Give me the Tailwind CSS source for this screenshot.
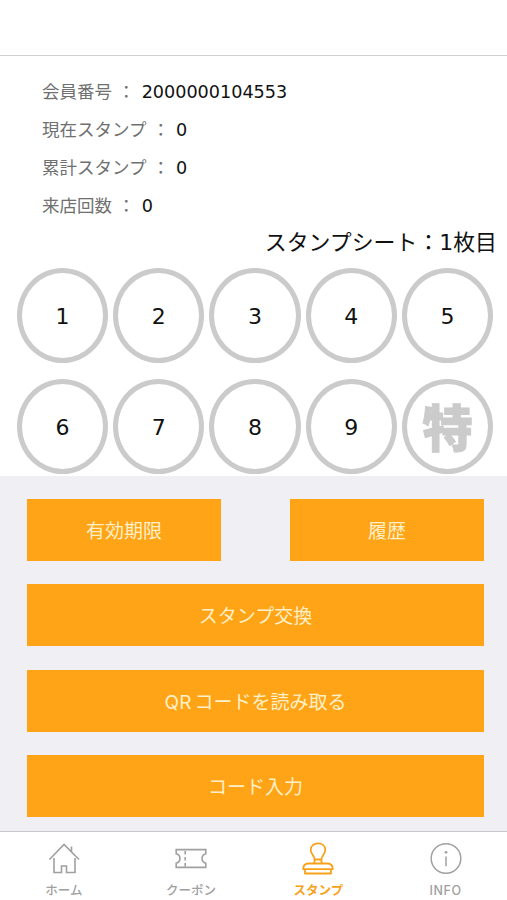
<!DOCTYPE html>
<html lang="ja">

<head>
    <meta charset="UTF-8" />
    <meta name="viewport" content="width=device-width, initial-scale=1.0" />
    <title>スタンプ</title>
    <script src="https://cdn.jsdelivr.net/npm/@tailwindcss/browser@4"></script>
</head>

<body class="bg-white font-['DejaVu_Sans','Noto_Sans_CJK_JP',sans-serif] text-[#111]">
    <div class="flex flex-col w-[507px] h-[900px] overflow-hidden">

        <!-- Header -->
        <header class="h-14 shrink-0 border-b border-[#d0d0d0]"></header>

        <main class="h-[420px] shrink-0">
            <!-- Member info -->
            <dl class="pl-[42px] pt-[17px] text-[17.5px] leading-[38px]">
                <div class="flex gap-px h-[38px] whitespace-pre">
                    <dt class="text-[#707070]">会員番号 ： </dt>
                    <dd class="text-[17.6px]">2000000104553</dd>
                </div>
                <div class="flex gap-px h-[38px] whitespace-pre">
                    <dt class="text-[#707070]">現在スタンプ ： </dt>
                    <dd class="text-[17.6px]">0</dd>
                </div>
                <div class="flex gap-px h-[38px] whitespace-pre">
                    <dt class="text-[#707070]">累計スタンプ ： </dt>
                    <dd class="text-[17.6px]">0</dd>
                </div>
                <div class="flex gap-px h-[38px] whitespace-pre">
                    <dt class="text-[#707070]">来店回数 ： </dt>
                    <dd class="text-[17.6px]">0</dd>
                </div>
            </dl>

            <p class="h-[43px] pr-[10px] text-right text-[21.9px] leading-[35px]">スタンプシート：1枚目</p>

            <!-- Stamp sheet -->
            <div class="grid grid-cols-5 gap-x-[5px] gap-y-4 pl-[17px] pr-[14px] text-[22px]">
                <div class="flex items-center justify-center h-[95px] pt-0.5 rounded-[50%] border-5 border-[#cbcbcb]">1</div>
                <div class="flex items-center justify-center h-[95px] pt-0.5 rounded-[50%] border-5 border-[#cbcbcb]">2</div>
                <div class="flex items-center justify-center h-[95px] pt-0.5 rounded-[50%] border-5 border-[#cbcbcb]">3</div>
                <div class="flex items-center justify-center h-[95px] pt-0.5 rounded-[50%] border-5 border-[#cbcbcb]">4</div>
                <div class="flex items-center justify-center h-[95px] pt-0.5 rounded-[50%] border-5 border-[#cbcbcb]">5</div>
                <div class="flex items-center justify-center h-[95px] pt-0.5 rounded-[50%] border-5 border-[#cbcbcb]">6</div>
                <div class="flex items-center justify-center h-[95px] pt-0.5 rounded-[50%] border-5 border-[#cbcbcb]">7</div>
                <div class="flex items-center justify-center h-[95px] pt-0.5 rounded-[50%] border-5 border-[#cbcbcb]">8</div>
                <div class="flex items-center justify-center h-[95px] pt-0.5 rounded-[50%] border-5 border-[#cbcbcb]">9</div>
                <div class="flex items-center justify-center h-[95px] pb-1 rounded-[50%] border-5 border-[#cbcbcb] text-[#cbcbcb]">
                    <span class="font-['Noto_Sans_CJK_JP',sans-serif] font-black text-[50px] leading-none [-webkit-text-stroke:1px_#cbcbcb]">特</span>
                </div>
            </div>
        </main>

        <!-- Actions -->
        <section class="flex flex-col gap-[23.4px] h-[355px] shrink-0 pt-[23px] pl-[27px] pr-[23px] bg-[#efeff4] font-['Inter','Noto_Sans_CJK_JP',sans-serif] text-[19px] text-[#fff0c8]">
            <div class="flex justify-between">
                <button class="w-[194px] h-[62px] pt-1 bg-[#ffa416]">有効期限</button>
                <button class="w-[194px] h-[62px] pt-1 bg-[#ffa416]">履歴</button>
            </div>
            <button class="h-[62px] shrink-0 pt-1 bg-[#ffa416]">スタンプ交換</button>
            <button class="h-[62px] shrink-0 pt-1 bg-[#ffa416]"><span class="mr-[3px]">QR</span>コードを読み取る</button>
            <button class="h-[62px] shrink-0 pt-1 bg-[#ffa416]">コード入力</button>
        </section>

        <!-- Tab bar -->
        <nav class="grid grid-cols-4 grow border-t border-[#c8c8cc] text-[#a0a0a0] font-['Inter','Noto_Sans_CJK_JP',sans-serif] text-[12.5px] font-medium">
            <a class="flex flex-col items-center pt-[9px] pl-px">
                <svg class="size-9" viewBox="0 0 36 36" fill="none" stroke="currentColor" stroke-width="1.6">
                    <path d="M3.500 18.500 18 3.500l15 15M25.500 11V5.500M8 17v14.500h7.500V25h5v6.500H29V17" />
                </svg>
                <span class="leading-[28px]">ホーム</span>
            </a>
            <a class="flex flex-col items-center pt-[9px] pl-0.5">
                <svg class="size-9" viewBox="0 0 36 36" fill="none" stroke="currentColor" stroke-width="1.6">
                    <path d="M3.200 8.600h29.600v4.200c-5 1.500-5 7.900 0 9.400v4.200H3.200v-4.200c5-1.500 5-7.900 0-9.400z" />
                    <path d="M12.200 10v16" stroke-dasharray="3.500 2.500" />
                </svg>
                <span class="leading-[28px]">クーポン</span>
            </a>
            <a class="flex flex-col items-center pt-[9px] pl-[3px] text-[#f9a11b] font-bold">
                <svg class="size-9" viewBox="0 0 36 36" fill="none" stroke="currentColor" stroke-width="1.8" stroke-linejoin="round">
                    <path d="M14.500 18.500c0-4-3.800-5.500-3.800-9.500 0-4.200 3-6.700 7.300-6.700s7.300 2.500 7.300 6.700c0 4-3.800 5.500-3.800 9.500zM14.500 18.500v4M21.500 18.500v4" />
                    <path d="M8.500 22.500h19c3 0 5.300 2 5.300 5.700H3.200c0-3.700 2.300-5.700 5.300-5.700zM5 28.200v4.300h26v-4.300" />
                </svg>
                <span class="leading-[28px]">スタンプ</span>
            </a>
            <a class="flex flex-col items-center pt-[9px] pl-1">
                <svg class="size-9" viewBox="0 0 36 36" fill="none" stroke="currentColor" stroke-width="1.500">
                    <circle cx="18" cy="17.500" r="14.800" />
                    <path d="M18 15.500v9.700" />
                    <circle cx="18" cy="11.300" r="1.400" fill="currentColor" stroke="none" />
                </svg>
                <span class="leading-[28px] tracking-[0.6px]">INFO</span>
            </a>
        </nav>
    </div>
</body>

</html>
